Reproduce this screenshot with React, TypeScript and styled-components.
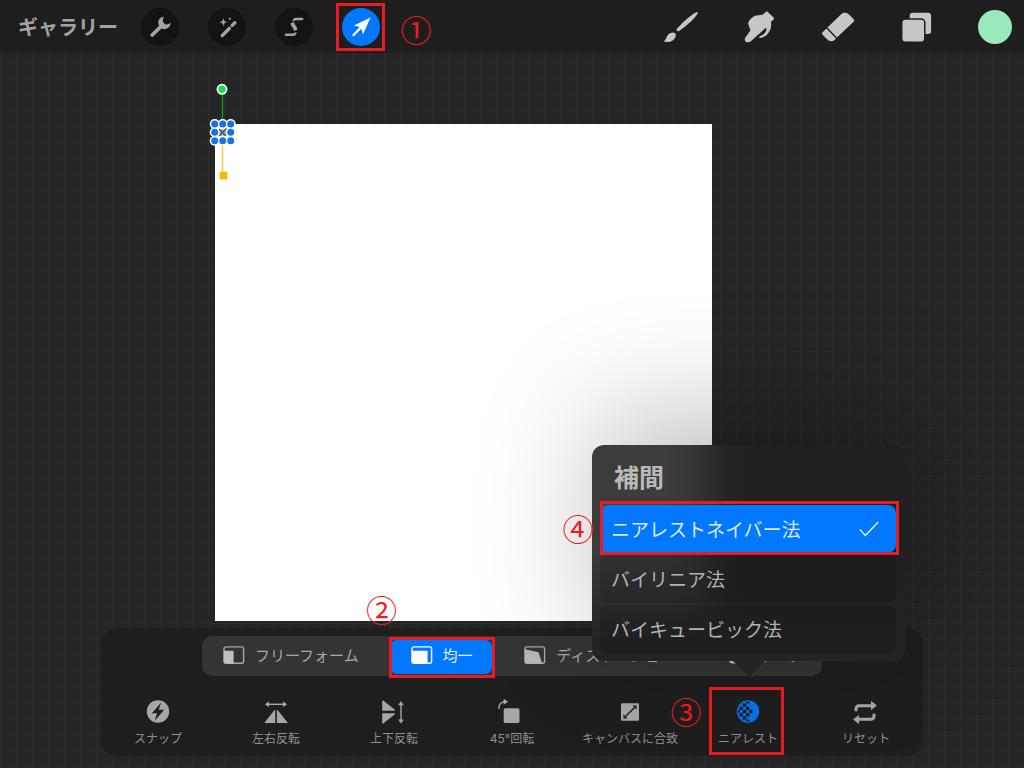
import React from "react";
import styled, { createGlobalStyle, css } from "styled-components";

const GlobalStyle = createGlobalStyle`
  *, *::before, *::after { box-sizing: border-box; }
  body {
    margin: 0;
    background: #252525;
    font-family: "Noto Sans CJK JP", "Noto Sans", sans-serif;
  }
  button { display: block; font: inherit; color: inherit; border: 0; background: none; padding: 0; cursor: pointer; }
  svg { display: block; overflow: visible; }
`;

const Page = styled.div`
  min-height: 100vh;
  display: flex;
  flex-direction: column;
`;

/* ---------- top bar ---------- */

const TopBar = styled.header`
  display: flex;
  align-items: center;
  justify-content: space-between;
  height: 53px;
  padding: 0 12px 0 18px;
  background: #1e1e1e;
  position: relative;
  z-index: 3;
`;

const ActionGroup = styled.nav`
  display: flex;
  align-items: center;
  gap: 29px;
`;

const PaintGroup = styled.div`
  display: flex;
  align-items: center;
  gap: 45px;
`;

const GalleryButton = styled.button`
  width: 100px;
  margin-right: -6px;
  font-size: 20px;
  font-weight: 700;
  line-height: 24px;
  color: #a3a3a3;
  white-space: nowrap;
  text-align: left;
`;

const RoundButton = styled.button<{ $active?: boolean }>`
  width: 38px;
  height: 38px;
  border-radius: 50%;
  background: ${(p) => (p.$active ? "#0278ff" : "#131313")};
  color: ${(p) => (p.$active ? "#ffffff" : "#a3a3a3")};
`;

const PaintButton = styled.button`
  width: 34px;
  height: 34px;
  color: #c6c6c6;
`;

const ColorButton = styled.button`
  width: 34px;
  height: 34px;
  border-radius: 50%;
  background: #99e9ba;
`;

/* ---------- tutorial annotations ---------- */

const Target = styled.div`
  position: relative;
`;

const Frame = styled.span<{ $inset: string }>`
  position: absolute;
  inset: ${(p) => p.$inset};
  border: 3px solid #e81c24;
  pointer-events: none;
  z-index: 1;
`;

const Marker = styled.span<{ $left: string; $top: string }>`
  position: absolute;
  left: ${(p) => p.$left};
  top: ${(p) => p.$top};
  width: 32px;
  font-size: 31px;
  line-height: 30px;
  font-weight: 400;
  text-align: center;
  color: #ed1c24;
  pointer-events: none;
  z-index: 1;
`;

/* ---------- workspace ---------- */

const Workspace = styled.main`
  position: relative;
  flex: 1;
  display: flex;
  flex-direction: column;
  justify-content: flex-end;
  align-items: center;
  min-height: 640px;
  padding: 0 16px 12px;
  overflow: hidden;
  background-color: #252525;
  background-image: linear-gradient(#2c2c2c 1px, transparent 1px),
    linear-gradient(90deg, #2c2c2c 1px, transparent 1px);
  background-size: 16px 16px;
  background-position: 0 10px;
`;

const Artboard = styled.div`
  position: absolute;
  left: 21%;
  top: 71px;
  width: 48.5%;
  aspect-ratio: 1;
  background: #ffffff;
`;

const HandleLayer = styled.div`
  position: absolute;
  left: -8px;
  top: -42px;
`;

/* ---------- transform panel ---------- */

const Panel = styled.section`
  position: relative;
  width: 100%;
  max-width: 822px;
  padding: 8px 0 9px;
  border-radius: 16px;
  background: #1e1e1e;
`;

const ModeBar = styled.div`
  display: flex;
  justify-content: space-between;
  align-items: center;
  max-width: 620px;
  height: 40px;
  margin: 0 auto 20px;
  padding-top: 2px;
  border-radius: 10px;
  background: #343434;
`;

const ModeButton = styled.button<{ $active?: boolean }>`
  display: flex;
  align-items: center;
  gap: 10px;
  height: 34px;
  padding: 0 19px 4px 21px;
  border-radius: 7px;
  font-size: 15px;
  line-height: 20px;
  white-space: nowrap;
  color: #a8a8a8;
  ${(p) =>
    p.$active &&
    css`
      background: #0278ff;
      color: #e4efff;
    `}
`;

const ToolGrid = styled.div`
  display: grid;
  grid-template-columns: repeat(7, 1fr);
  margin: 0 -2px;
`;

const ToolButton = styled.button`
  display: flex;
  flex-direction: column;
  align-items: center;
  gap: 3px;
  width: 100%;
  font-family: Inter, "Noto Sans CJK JP", sans-serif;
  font-size: 12px;
  line-height: 16px;
  white-space: nowrap;
  color: #909090;
`;

const ToolIcon = styled.svg<{ $active?: boolean }>`
  width: 32px;
  height: 32px;
  color: ${(p) => (p.$active ? "#0a6fe8" : "#a6a6a6")};
`;

/* ---------- interpolation popover ---------- */

const Popover = styled.div`
  position: absolute;
  left: calc(50% - 156px);
  bottom: calc(100% + 35px);
  z-index: 2;
  width: 313px;
  padding: 0 9px 8px 8px;
  border-radius: 12px;
  background: linear-gradient(180deg, transparent 45%, #232323 92%),
    linear-gradient(90deg, #3c3c3c 24%, #363636 32%, #242424 43%, #202020 52%);
  box-shadow: 6px -28px 120px rgba(0, 0, 0, 0.26);

  &::after {
    content: "";
    position: absolute;
    top: 100%;
    left: 50%;
    border: 16px solid transparent;
    border-top-color: #232323;
    border-bottom-width: 0;
    transform: translateX(-50%);
  }
`;

const PopoverTitle = styled.h2`
  margin: 0;
  padding: 13px 14px 11px;
  font-size: 25px;
  line-height: 36px;
  font-weight: 700;
  color: #b9b9b9;
`;

const OptionList = styled.div`
  display: flex;
  flex-direction: column;
  gap: 2px;
`;

const OptionButton = styled.button<{ $active?: boolean }>`
  display: flex;
  align-items: center;
  justify-content: space-between;
  width: 100%;
  height: 48px;
  padding: 0 17px 0 11px;
  border-radius: 8px;
  font-size: 19px;
  line-height: 28px;
  white-space: nowrap;
  background: ${(p) => (p.$active ? "#0278ff" : "rgba(0, 0, 0, 0.13)")};
  color: ${(p) => (p.$active ? "#dcebff" : "#b2b2b2")};
`;

/* ---------- icons ---------- */

const WrenchIcon = () => (
  <svg width="38" height="38" viewBox="0 0 38 38" fill="currentColor" aria-hidden="true">
    <path d="M11.2 27 20.5 18" stroke="currentColor" strokeWidth="3.8" strokeLinecap="round" />
    <path d="M23 8.8C20.6 8.8 18.4 10.4 17.6 12.6C17 14.6 17.2 16.3 18.2 17.8L20.8 20.6C23 21.6 25.6 21.2 27.4 19.6C29 18.1 29.8 16.2 29.4 14.2C28.3 15.8 26.8 16.8 25 16.4C23.2 15.9 22 14.4 21.8 12.4C21.8 11 22.2 9.9 23 8.8Z" />
  </svg>
);

const WandIcon = () => (
  <svg width="38" height="38" viewBox="0 0 38 38" fill="currentColor" aria-hidden="true">
    <path d="M14.2 27.6 21.8 20M24.2 17.4 26.8 14.8" stroke="currentColor" strokeWidth="3.4" strokeLinecap="round" />
    <path d="M21.2 18 24.8 21.6" stroke="#131313" strokeWidth="1" />
    <path d="M15.4 9.4C15.8 12.8 16.6 13.7 20 14.1C16.6 14.5 15.8 15.5 15.4 18.9C15 15.5 14.2 14.5 10.8 14.1C14.2 13.7 15 12.8 15.4 9.4Z" />
    <path d="M21.9 8.8C22.1 10.2 22.5 10.6 23.9 10.8C22.5 11 22.1 11.4 21.9 12.8C21.7 11.4 21.3 11 19.9 10.8C21.3 10.6 21.7 10.2 21.9 8.8Z" />
  </svg>
);

const SelectionIcon = () => (
  <svg width="38" height="38" viewBox="0 0 38 38" fill="currentColor" aria-hidden="true">
    <path d="M20.6 9.8H27.4C28.8 9.8 28.8 12.2 27.4 12.3H20.6L17.2 13.8C17.6 11.4 18.8 9.9 20.6 9.8Z" />
    <path d="M15.6 15.2 19.2 14.1C19.2 17.2 22.4 18.3 22.4 21.8L19 23C19 19.6 15.4 18.4 15.6 15.2Z" />
    <path d="M10.8 25.4H18L21.6 24C21.4 26.6 20.2 28 18 28.1H10.8C9.4 28 9.4 25.6 10.8 25.4Z" />
  </svg>
);

const TransformIcon = () => (
  <svg width="38" height="38" viewBox="0 0 38 38" fill="currentColor" aria-hidden="true">
    <path d="M28.5 9.6 21 26.6 19.4 20.8 12 27.9C10.9 28.6 9.9 27.6 10.6 26.5L17.6 19 11.9 17.6Z" />
  </svg>
);

const BrushIcon = () => (
  <svg width="34" height="34" viewBox="0 0 34 34" fill="currentColor" aria-hidden="true">
    <path d="M35.5 2.2C36.1 2.9 35.5 3.9 34.9 4.7C30.500 10.400 23.500 17 16.200 21.400L14.200 19.900C19 13.800 26.800 6.600 33.400 2.700C34.200 2.200 35 1.800 35.500 2.200Z" />
    <path d="M1.300 31.300C4 30.400 4.200 27.400 5.700 25.200C7.500 22.700 10.800 21.800 13.200 23C14.600 25.600 13.400 28.600 10.600 30.400C7.800 32.200 4.200 32.600 1.300 31.300Z" />
  </svg>
);

const SmudgeIcon = () => (
  <svg width="34" height="34" viewBox="0 0 34 34" fill="currentColor" aria-hidden="true">
    <path d="M25 1.800C25.600 1.300 26.200 1.400 26.800 1.900L32.600 7.600C33.200 8.200 33.200 8.900 32.600 9.400L30 11.800C30.400 14.800 30.200 17.600 29 20C27.600 23.400 24.600 26.800 20.600 27.800C19.400 28.100 18 27.900 18.200 26.900C18.600 25.900 20 25.900 21 25.300C23.400 23.900 25.600 21.400 25.400 18.600C25.200 17.800 24.600 18 24 18.500L9.800 31.200C8.400 32.400 5.600 32.600 4.400 31.400C3.600 30.400 3.600 28.800 4.400 27.600L9.400 20.600C9.200 18.200 7.600 16.200 7.200 13.800C7.400 10.800 10.400 7.800 13 6.200C15.800 5 19.400 5.800 22 4.600Z" />
  </svg>
);

const EraserIcon = () => (
  <svg width="34" height="34" viewBox="0 0 34 34" fill="currentColor" aria-hidden="true">
    <path d="M21.400 4C23 2.400 26 2.200 27.800 3.600C29.800 5.200 31.800 7.200 33.800 9.400C34.400 10.200 34.400 10.800 33.800 11.400L17 27.600 7.400 17.600Z" />
    <path d="M6.400 18.600 16 28.600 14.600 30C12.800 31.600 10 31.600 8.200 30.200C6 28.600 4.200 26.800 2.400 24.600C1.800 23.800 1.800 23.200 2.400 22.600Z" />
  </svg>
);

const LayersIcon = () => (
  <svg width="34" height="34" viewBox="0 0 34 34" fill="currentColor" aria-hidden="true">
    <rect x="10.700" y="2.700" width="21.400" height="21.400" rx="3" />
    <rect x="2.700" y="9.100" width="23.100" height="23.100" rx="3.600" stroke="#1e1e1e" strokeWidth="1.500" />
  </svg>
);

const FreeformIcon = () => (
  <svg width="22" height="18" viewBox="0 0 22 18" aria-hidden="true">
    <rect x="1" y="0.900" width="19.600" height="16.400" rx="2" fill="none" stroke="currentColor" strokeWidth="1.400" />
    <path d="M0.800 4.800H9.600Q10.600 4.800 10.600 5.800V17.600H2.400Q0.800 17.600 0.800 16Z" fill="#c0c0c0" />
  </svg>
);

const UniformIcon = () => (
  <svg width="22" height="18" viewBox="0 0 22 18" aria-hidden="true">
    <rect x="1" y="0.900" width="19.600" height="16.400" rx="2" fill="none" stroke="#ffffff" strokeWidth="1.400" />
    <path d="M0.800 4.800H15.200Q16.600 4.800 16.600 6.200V17.600H2.400Q0.800 17.600 0.800 16Z" fill="#ffffff" />
  </svg>
);

const DistortIcon = () => (
  <svg width="22" height="18" viewBox="0 0 22 18" aria-hidden="true">
    <rect x="1" y="0.900" width="19.600" height="16.400" rx="2" fill="none" stroke="currentColor" strokeWidth="1.400" />
    <path d="M0.800 3.200 13.400 6Q14.600 6.400 15 7.600L18 17.600H2.400Q0.800 17.600 0.800 16Z" fill="#b8b8b8" />
  </svg>
);

const WarpIcon = () => (
  <svg width="22" height="18" viewBox="0 0 22 18" aria-hidden="true">
    <rect x="1" y="0.900" width="19.600" height="13" rx="2" fill="none" stroke="currentColor" strokeWidth="1.400" />
    <path d="M1 5Q6 3 9 8L13 17.500H5Q2 17 2 14Z" fill="#b8b8b8" />
  </svg>
);

const SnapIcon = () => (
  <ToolIcon viewBox="0 0 32 32" aria-hidden="true">
    <circle cx="16" cy="15.500" r="11.200" fill="currentColor" />
    <path d="M19.200 6.400 9.800 17.300H15.100L12.800 24.800 22.200 13.700H16.700Z" fill="#1e1e1e" />
  </ToolIcon>
);

const FlipHorizontalIcon = () => (
  <ToolIcon viewBox="0 0 32 32" fill="currentColor" aria-hidden="true">
    <path d="M7 8.300H25" stroke="currentColor" strokeWidth="1.400" />
    <path d="M4.800 8.300 9 5.500V11.100ZM27.200 8.300 23 5.500V11.100Z" />
    <path d="M15.300 14V27H5.200Q4.200 27 4.800 26.200L14.400 14.300ZM16.900 14V27H27Q28 27 27.400 26.200L17.800 14.300Z" />
  </ToolIcon>
);

const FlipVerticalIcon = () => (
  <ToolIcon viewBox="0 0 32 32" fill="currentColor" aria-hidden="true">
    <path d="M23 7.500V25" stroke="currentColor" strokeWidth="1.400" />
    <path d="M23 5 20.200 9.200H25.800ZM23 27.600 20.200 23.400H25.800Z" />
    <path d="M4.200 5Q4.400 4 5.200 4.600L16.600 13.600 17 14.700H4.200ZM4.200 17.300H17L16.600 18.400 5.200 27.600Q4.400 28.200 4.200 27.200Z" />
  </ToolIcon>
);

const RotateIcon = () => (
  <ToolIcon viewBox="0 0 32 32" fill="currentColor" aria-hidden="true">
    <rect x="7.700" y="12.300" width="15.800" height="14.800" rx="1.500" />
    <path d="M3.100 12.800C2.600 8.800 4.600 6 8.400 5.800" fill="none" stroke="currentColor" strokeWidth="1.400" />
    <path d="M7.600 2.800 12.200 5.800 7.600 8.800Z" />
  </ToolIcon>
);

const FitIcon = () => (
  <ToolIcon viewBox="0 0 32 32" aria-hidden="true">
    <rect x="7" y="7.200" width="18" height="17.600" rx="1.200" fill="currentColor" />
    <path d="M11.500 20.500 20.500 11.500" stroke="#1e1e1e" strokeWidth="1.400" />
    <path d="M22.600 9.600V13.800L18.400 9.600ZM9.400 22.400V18.200L13.600 22.400Z" fill="#1e1e1e" />
  </ToolIcon>
);

const checkerColumns = [4.5, 7.7, 10.9, 14.1, 17.3];
const checkerRows = [4.3, 7.5, 10.7, 13.9, 17.1, 20.3, 23.5];

const NearestIcon = () => (
  <ToolIcon $active viewBox="0 0 32 32" aria-hidden="true">
    <clipPath id="nearest-clip">
      <circle cx="16" cy="15.500" r="10" />
    </clipPath>
    <circle cx="16" cy="15.500" r="11.200" fill="currentColor" />
    <g clipPath="url(#nearest-clip)" fill="#1c1c1c">
      {checkerRows.map((y, r) =>
        checkerColumns.map((x, c) =>
          (r + c) % 2 === 1 && (c < 4 || r === 3) ? (
            <rect key={`${x}-${y}`} x={x} y={y} width="3.200" height="3.200" />
          ) : null
        )
      )}
    </g>
  </ToolIcon>
);

const ResetIcon = () => (
  <ToolIcon viewBox="0 0 32 32" fill="currentColor" aria-hidden="true">
    <path d="M6 15.300V13Q6 9.700 9.300 9.700H21.500M24 17.700V20Q24 23.300 20.700 23.300H8.500" fill="none" stroke="currentColor" strokeWidth="3" />
    <path d="M21 4.800 26.900 9.500 21 14.200ZM9 18.700 3.100 23.400 9 28.100Z" />
  </ToolIcon>
);

const CheckIcon = () => (
  <svg width="20" height="16" viewBox="0 0 20 16" fill="none" stroke="#e6f1ff" strokeWidth="1.500" aria-hidden="true">
    <path d="M0.800 8.600 6.400 14.400 19.200 1" />
  </svg>
);

const columns = [7.7, 15.7, 23.7];
const rows = [42, 50.3, 58.7];

const TransformHandles = () => (
  <svg width="32" height="100" viewBox="0 0 32 100" aria-hidden="true">
    <path d="M15.500 12V38" stroke="#0a9a14" strokeWidth="1.400" />
    <path d="M15.500 63V90" stroke="#fcc63a" strokeWidth="1.400" />
    <circle cx="15" cy="7.300" r="4.600" fill="#1bdc4b" stroke="#ffffff" strokeWidth="1.700" />
    {rows.map((y) => columns.map((x) => <circle key={`${x}-${y}`} cx={x} cy={y} r="5" fill="#ffffff" />))}
    {rows.map((y, r) =>
      columns.map((x, c) =>
        r === 1 && c === 1 ? null : <circle key={`${x}-${y}`} cx={x} cy={y} r="3.500" fill="#1672e6" />
      )
    )}
    <rect x="12.500" y="47.300" width="6.400" height="6.400" fill="#8fb39b" />
    <path d="M12 47 19 54M19.500 46.500 12 54" stroke="#4a4a50" strokeWidth="1.200" />
    <rect x="12.600" y="89.700" width="7.800" height="7.800" rx="1.200" fill="#fbb800" />
  </svg>
);

/* ---------- screen ---------- */

const interpolationOptions = ["ニアレストネイバー法", "バイリニア法", "バイキュービック法"];

const InterpolationPopover = () => (
  <Popover role="dialog" aria-labelledby="interpolation-title">
    <PopoverTitle id="interpolation-title">補間</PopoverTitle>
    <OptionList>
      {interpolationOptions.map((label, index) => (
        <Target key={label}>
          <OptionButton type="button" $active={index === 0} aria-pressed={index === 0}>
            {label}
            {index === 0 && <CheckIcon />}
          </OptionButton>
          {index === 0 && (
            <>
              <Frame $inset="-4px -3px -2px 0" />
              <Marker $left="-38px" $top="8px">④</Marker>
            </>
          )}
        </Target>
      ))}
    </OptionList>
  </Popover>
);

export default function App() {
  return (
    <Page>
      <GlobalStyle />
      <TopBar>
        <ActionGroup>
          <GalleryButton type="button">ギャラリー</GalleryButton>
          <RoundButton type="button" aria-label="アクション"><WrenchIcon /></RoundButton>
          <RoundButton type="button" aria-label="調整"><WandIcon /></RoundButton>
          <RoundButton type="button" aria-label="選択"><SelectionIcon /></RoundButton>
          <Target>
            <RoundButton type="button" $active aria-label="変形"><TransformIcon /></RoundButton>
            <Frame $inset="-5px -5px -5px -6px" />
            <Marker $left="58px" $top="6px">①</Marker>
          </Target>
        </ActionGroup>
        <PaintGroup>
          <PaintButton type="button" aria-label="ブラシ"><BrushIcon /></PaintButton>
          <PaintButton type="button" aria-label="ぼかし"><SmudgeIcon /></PaintButton>
          <PaintButton type="button" aria-label="消しゴム"><EraserIcon /></PaintButton>
          <PaintButton type="button" aria-label="レイヤー"><LayersIcon /></PaintButton>
          <ColorButton type="button" aria-label="カラー" />
        </PaintGroup>
      </TopBar>

      <Workspace>
        <Artboard>
          <HandleLayer>
            <TransformHandles />
          </HandleLayer>
        </Artboard>

        <Panel>
          <ModeBar>
            <ModeButton type="button"><FreeformIcon />フリーフォーム</ModeButton>
            <Target>
              <ModeButton type="button" $active><UniformIcon />均一</ModeButton>
              <Frame $inset="-3px -3px -4px -1px" />
              <Marker $left="-24px" $top="-46px">②</Marker>
            </Target>
            <ModeButton type="button"><DistortIcon />ディストーション</ModeButton>
            <ModeButton type="button"><WarpIcon />ワープ</ModeButton>
          </ModeBar>

          <ToolGrid>
            <ToolButton type="button"><SnapIcon />スナップ</ToolButton>
            <ToolButton type="button"><FlipHorizontalIcon />左右反転</ToolButton>
            <ToolButton type="button"><FlipVerticalIcon />上下反転</ToolButton>
            <ToolButton type="button"><RotateIcon />45°回転</ToolButton>
            <ToolButton type="button"><FitIcon />キャンバスに合致</ToolButton>
            <Target>
              <ToolButton type="button"><NearestIcon />ニアレスト</ToolButton>
              <Frame $inset="-9px 23px -8px 20px" />
              <Marker $left="calc(50% - 78px)" $top="0">③</Marker>
              <InterpolationPopover />
            </Target>
            <ToolButton type="button"><ResetIcon />リセット</ToolButton>
          </ToolGrid>
        </Panel>
      </Workspace>
    </Page>
  );
}
